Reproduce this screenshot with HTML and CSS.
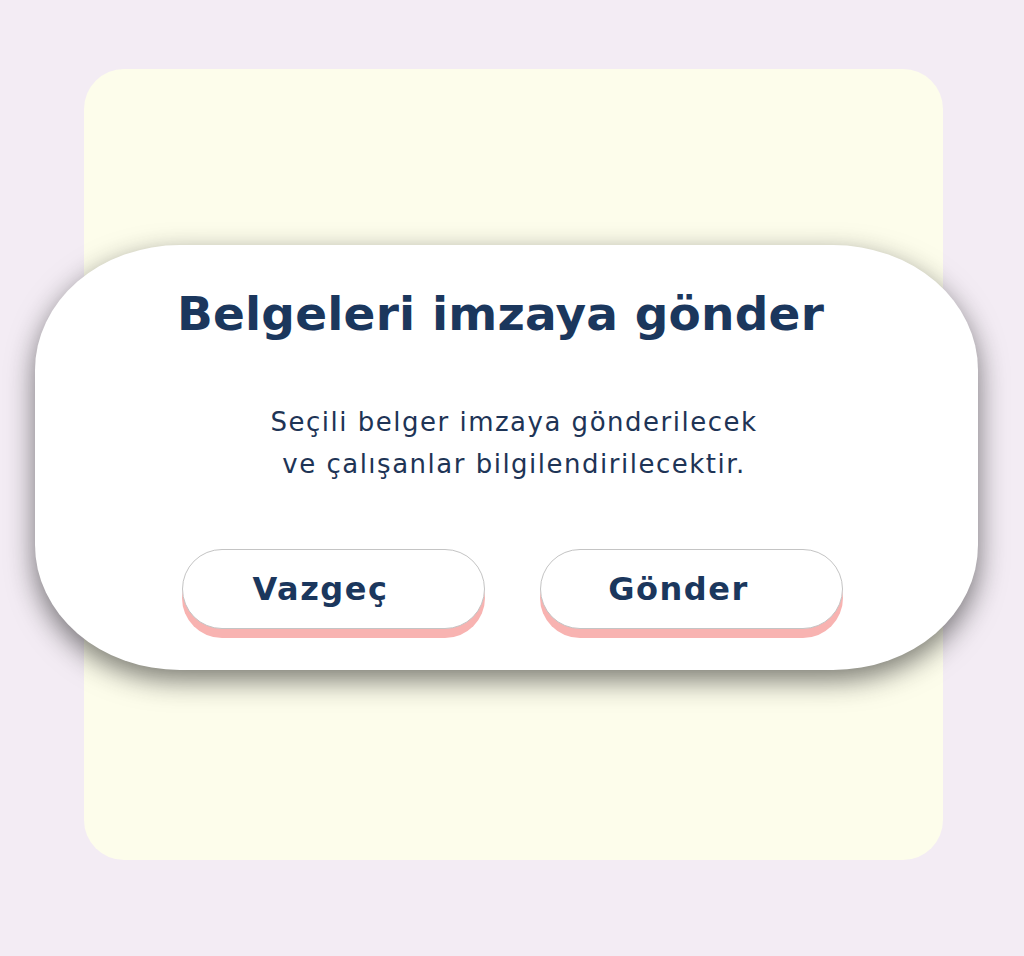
FILE: index.html
```html
<!DOCTYPE html>
<html lang="tr">
<head>
<meta charset="utf-8">
<title>Belgeleri imzaya gönder</title>
<link rel="stylesheet" href="styles.css">
</head>
<body>
<div class="card">
  <div class="modal">
    <h1 class="title">Belgeleri imzaya gönder</h1>
    <p class="text">Seçili belger imzaya gönderilecek<br>ve çalışanlar bilgilendirilecektir.</p>
    <div class="actions">
      <button class="btn">Vazgeç</button>
      <button class="btn">Gönder</button>
    </div>
  </div>
</div>
</body>
</html>
```

FILE: styles.css
```css
html, body {
  margin: 0;
  padding: 0;
}
body {
  background: #f3ecf4;
  width: 1024px;
  height: 956px;
  overflow: hidden;
  font-family: "DejaVu Sans", "Open Sans", sans-serif;
}
.card {
  box-sizing: border-box;
  margin: 69px 0 0 84px;
  width: 859px;
  height: 791px;
  background: #fdfdeb;
  border-radius: 40px;
  padding-top: 176px;
  display: flex;
  flex-direction: column;
}
.modal {
  box-sizing: border-box;
  margin-left: -49px;
  width: 943px;
  height: 425px;
  background: #ffffff;
  border-radius: 145px / 125px;
  box-shadow: 0 10px 28px rgba(30, 30, 30, 0.6);
  padding-top: 36px;
  display: flex;
  flex-direction: column;
  align-items: center;
  color: #1b375d;
}
.title {
  margin: 0 12px 0 0;
  font-size: 47px;
  line-height: 66px;
  font-weight: 700;
  letter-spacing: 0.2px;
}
.text {
  margin: 54px 0 0 15px;
  font-size: 26px;
  line-height: 42px;
  text-align: center;
  color: #1e3456;
  letter-spacing: 1.5px;
}
.actions {
  margin: 64px 0 0 12px;
  display: flex;
  gap: 55px;
}
.btn {
  box-sizing: border-box;
  width: 303px;
  height: 80px;
  background: #fff;
  border: 1px solid #c4c4c4;
  border-radius: 40px;
  box-shadow: 0 9px 0 #f8b3b1;
  font-family: inherit;
  font-size: 32px;
  font-weight: 700;
  letter-spacing: 1.5px;
  color: #1b375d;
  padding: 0 26px 0 0;
}
```
